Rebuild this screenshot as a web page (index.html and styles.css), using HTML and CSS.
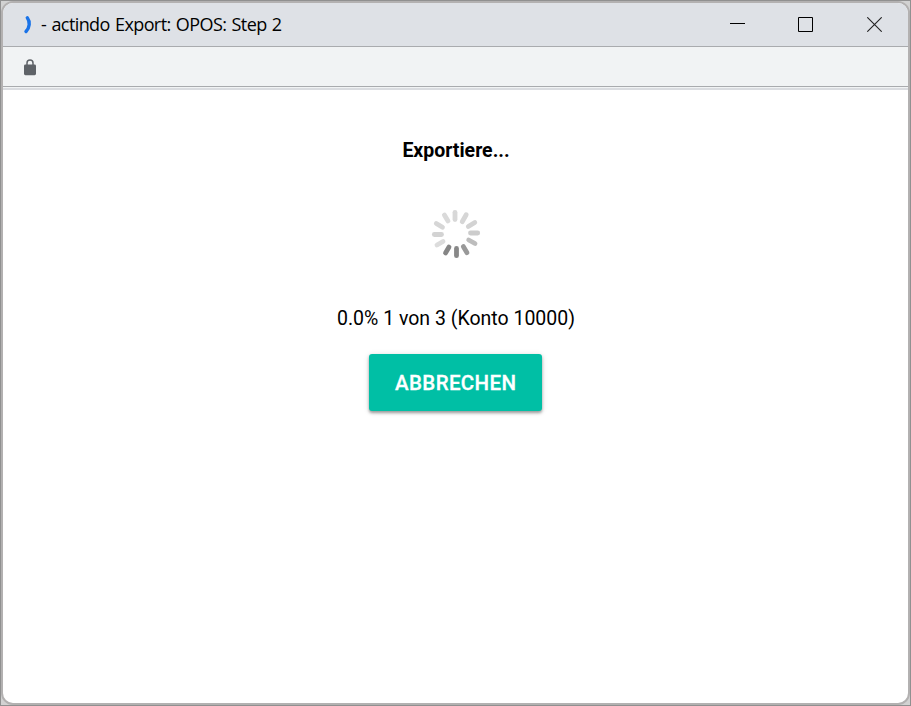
FILE: index.html
```html
<!DOCTYPE html>
<html lang="de">
<head>
<meta charset="utf-8">
<title>actindo Export: OPOS: Step 2</title>
<link rel="stylesheet" href="styles.css">
</head>
<body>
<div class="window">
  <header class="titlebar">
    <svg class="favicon" width="14" height="20" viewBox="0 0 14 20"><path d="M7.3 2.8C10.3 6.8 9.8 12.5 6 16.5" fill="none" stroke="#1a73e8" stroke-width="3.4" stroke-linecap="round"/></svg>
    <span class="title">- actindo Export: OPOS: Step 2</span>
    <div class="controls">
      <svg width="15" height="15" viewBox="0 0 15 15"><path d="M0 6.5h15" stroke="#000"/></svg>
      <svg width="15" height="15" viewBox="0 0 15 15"><path d="M.5 .5h14v14H.5z" fill="none" stroke="#000"/></svg>
      <svg width="15" height="15" viewBox="0 0 15 15"><path d="M.3 .3l14.4 14.4M14.7 .3L.3 14.7" stroke="#222" stroke-width="1.1"/></svg>
    </div>
  </header>
  <div class="addressbar">
    <svg width="12" height="17" viewBox="0 0 12 17"><path d="M3 6V4a3 3 0 0 1 6 0v2" fill="none" stroke="#5f6368" stroke-width="1.5"/><rect y="5.6" width="12" height="10.6" rx="1.4" fill="#5f6368"/></svg>
  </div>
  <main class="content">
    <h1>Exportiere...</h1>
    <svg class="spinner" width="50" height="50" viewBox="-25 -25 50 50" stroke-width="4.8" stroke-linecap="round">
      <path d="M-1-14.5V-21.7" stroke="#d8d8d8"/>
      <path d="M6.2-12.3L10.2-19.3" stroke="#d6d6d6"/>
      <path d="M12.3-7.5L18.8-11.5" stroke="#d3d3d3"/>
      <path d="M14.5-1H21.7" stroke="#cccccc"/>
      <path d="M12.7 6L19 9.5" stroke="#bdbdbd"/>
      <path d="M7.3 12.5L11 18.8" stroke="#999"/>
      <path d="M.5 14.5V21.7" stroke="#888"/>
      <path d="M-7 13L-10.5 19" stroke="#858585"/>
      <path d="M-13 7.5L-19 11" stroke="#dcdcdc"/>
      <path d="M-14.5 .5H-21.7" stroke="#d3d3d3"/>
      <path d="M-13.5-6.7L-19.7-10.5" stroke="#d6d6d6"/>
      <path d="M-8-13L-11.6-19" stroke="#dadada"/>
    </svg>
    <p>0.0% 1 von 3 (Konto 10000)</p>
    <button type="button">ABBRECHEN</button>
  </main>
</div>
</body>
</html>
```
FILE: styles.css
```css
* { box-sizing: border-box; }
body {
  margin: 0;
  height: 706px;
  border: 1px solid #909090;
  background: #d2d2d2;
  overflow: hidden;
  font-family: Roboto, sans-serif;
  color: #000;
}
.window {
  height: 704px;
  border: 2px solid #b3b1b1;
  border-radius: 12px;
  overflow: hidden;
  background: #fff;
  display: flex;
  flex-direction: column;
}
.titlebar {
  height: 44px;
  flex: none;
  display: flex;
  align-items: center;
  padding: 0 26px 0 17px;
  background: #dee1e6;
  border-bottom: 1px solid #a9abae;
}
.favicon { flex: none; }
.title {
  margin: -2px 0 0 7px;
  font: 18px/24px "Open Sans", sans-serif;
  letter-spacing: -0.6px;
  word-spacing: 1.2px;
  white-space: pre;
}
.controls {
  margin-left: auto;
  display: flex;
  gap: 54px;
}
.controls svg:first-child { margin-right: -1px; }
.addressbar {
  height: 43px;
  flex: none;
  padding: 12px 0 0 21px;
  background: linear-gradient(#f1f3f4 39px, #a9abae 39px 40px, #f1f3f4 40px 41px, #dadce0 41px);
}
.addressbar svg { display: block; }
.content {
  display: flex;
  flex-direction: column;
  align-items: center;
}
.content h1 {
  margin: 49px 0 0 1px;
  font-size: 19.5px;
  line-height: 24px;
  font-weight: 700;
}
.spinner { margin-top: 46px; display: block; filter: blur(0.4px); }
.content p {
  margin: 48px 0 0 1px;
  font-size: 19.5px;
  line-height: 24px;
}
.content button {
  margin-top: 23px;
  width: 173px;
  height: 57px;
  padding: 0;
  border: 0;
  border-radius: 3px;
  background: #00bfa5;
  color: #fff;
  font: 500 20.5px/24px Roboto, sans-serif;
  -webkit-text-stroke: 0.3px #fff;
  letter-spacing: 0.35px;
  text-indent: 0.4px;
  box-shadow: 0 2px 3px rgba(0, 0, 0, .35), 0 1px 6px rgba(0, 0, 0, .12);
}
```
